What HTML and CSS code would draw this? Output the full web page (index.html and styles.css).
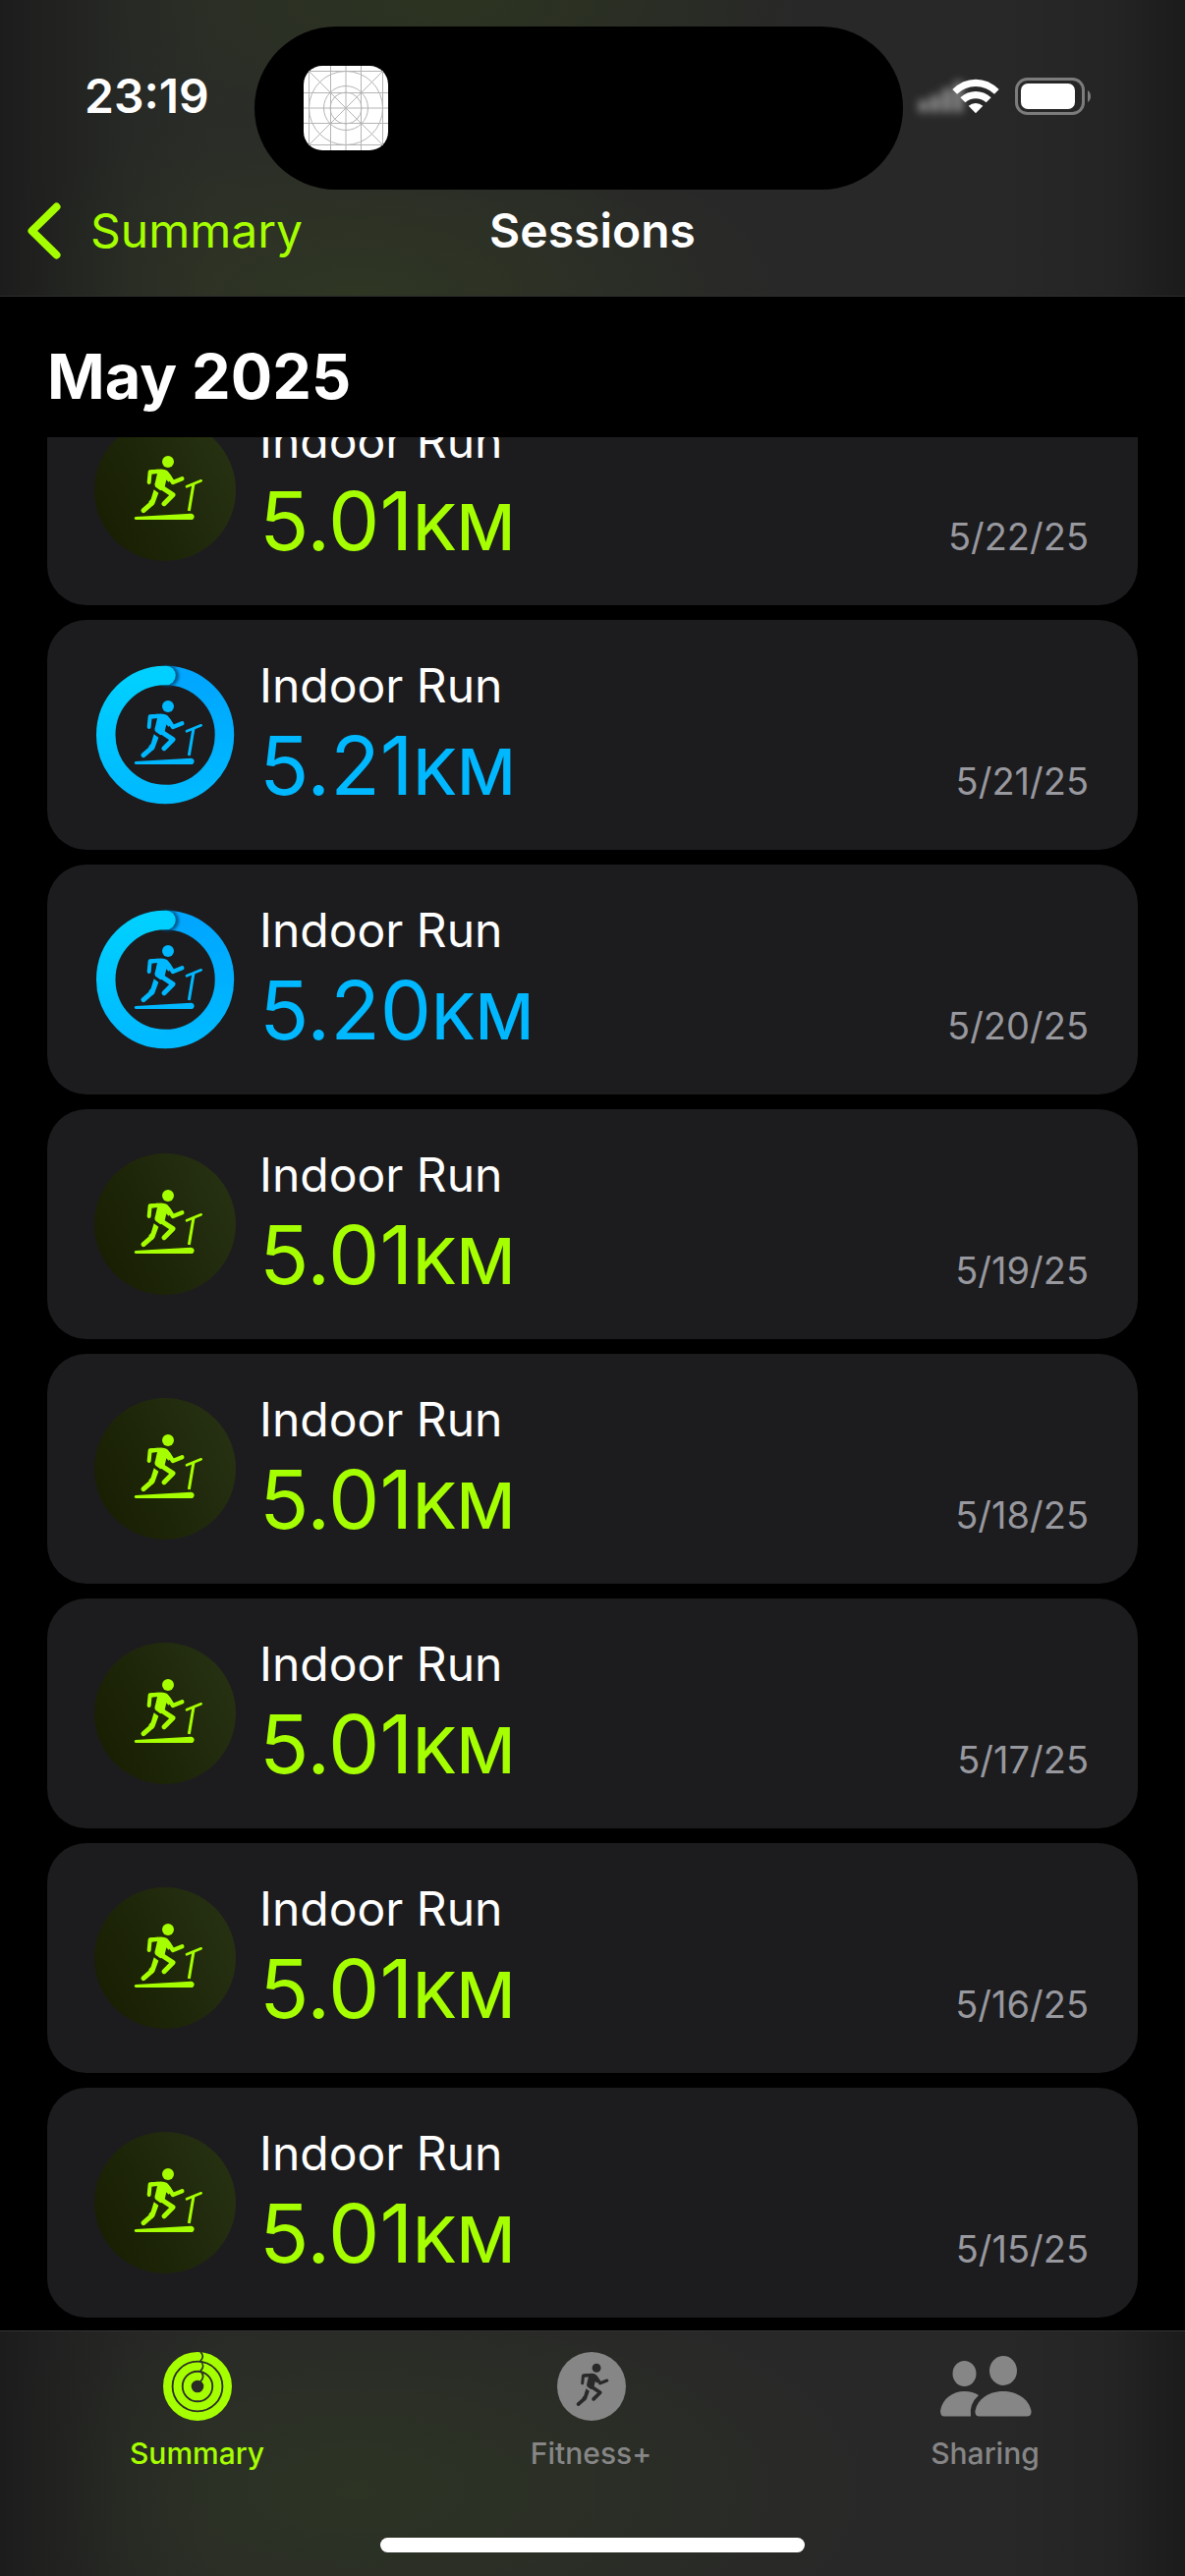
FILE: index.html
```html
<!DOCTYPE html>
<html lang="en">
<head>
<meta charset="utf-8">
<meta name="viewport" content="width=device-width, initial-scale=1">
<title>Sessions</title>
<link rel="stylesheet" href="styles.css">
</head>
<body>
<svg class="defs" aria-hidden="true">
  <defs>
    <linearGradient id="ring-start" x1="0" y1="0" x2="0" y2="1">
      <stop offset="0" stop-color="#00a6ff"/><stop offset="1" stop-color="#00baff"/>
    </linearGradient>
    <linearGradient id="ring-end" x1="0" y1="1" x2="0" y2="0">
      <stop offset="0" stop-color="#00baff"/><stop offset="1" stop-color="#00d0ff"/>
    </linearGradient>
    <filter id="cap-shadow" x="-50%" y="-50%" width="200%" height="200%">
      <feGaussianBlur stdDeviation="1.5"/>
    </filter>
  </defs>
  <symbol id="runner" viewBox="0 0 240 240">
    <circle cx="123" cy="36" r="18" fill="currentColor"/>
    <path d="M66 64Q70 59 92 59Q112 57 120 63Q127 68 137 88L124 98L118 91L112 116L100 124L86 114Q80 108 84 98L90 72L72 74Z" fill="currentColor"/>
    <g fill="none" stroke="currentColor" stroke-linecap="round" stroke-linejoin="round">
      <path d="M65 99L68 67L92 65" stroke-width="12"/>
      <path d="M124 78L138 99L166 88" stroke-width="13"/>
      <path d="M94 108L138 137L111 164" stroke-width="15"/>
      <path d="M73 163L48 185" stroke-width="15"/>
    </g>
    <path d="M80 121L94 131L82 164Q78 170 70 172L64 158L71 150Z" fill="currentColor"/>
  </symbol>
  <symbol id="treadmill" viewBox="0 0 240 240">
    <use href="#runner" width="240" height="240"/>
    <path d="M24 204L193 194Q202 195 203 203Q202 213 193 213L24 213Q20 212 20 208Q21 205 24 204Z" fill="currentColor"/>
    <path d="M180 112L224 94" fill="none" stroke="currentColor" stroke-width="8" stroke-linecap="round"/>
    <path d="M201 103L187 186" fill="none" stroke="currentColor" stroke-width="9"/>
  </symbol>
  <symbol id="goal" viewBox="0 0 144 144">
    <path d="M72 11.500A60.500 60.500 0 0 1 72 132.500" fill="none" stroke="url(#ring-start)" stroke-width="19.500"/>
    <circle cx="75" cy="12" r="11" fill="#00406a" opacity=".75" filter="url(#cap-shadow)"/>
    <path d="M72.500 132.500A60.500 60.500 0 0 1 72 11.500" fill="none" stroke="url(#ring-end)" stroke-width="19.500"/>
    <circle cx="73" cy="11.500" r="9.750" fill="#00d0ff"/>
    <use href="#treadmill" x="34" y="31" width="80" height="80"/>
  </symbol>
  <symbol id="plain" viewBox="0 0 144 144">
    <use href="#treadmill" x="34" y="31" width="80" height="80"/>
  </symbol>
</svg>

<div class="screen">
  <header class="header">
    <div class="status">
      <span class="time">23:19</span>
      <div class="status-icons">
        <svg class="signal" viewBox="0 0 50 36" aria-hidden="true"><path d="M2 22h9v12H2zM14 17h9v17h-9zM26 10h9v24h-9zM38 3h9v31h-9z" fill="#888"/></svg>
        <svg class="wifi" viewBox="0 0 144 108" aria-hidden="true" fill="#fff">
          <path d="M1 33Q32 2 72 2Q112 2 143 33L129 47Q104 24 72 24Q40 24 15 47Z"/>
          <path d="M25 58Q46 39 72 39Q98 39 119 58L104 73Q90 61 72 61Q54 61 40 73Z"/>
          <path d="M50 83Q60 75 72 75Q84 75 94 83L72 106Z"/>
        </svg>
        <svg class="battery" viewBox="0 0 78 38" aria-hidden="true">
          <rect x="1.500" y="1.500" width="68" height="35" rx="11" fill="none" stroke="#7c7c7c" stroke-width="3"/>
          <rect x="6" y="6" width="55" height="26" rx="7" fill="#fff"/>
          <path d="M74 13Q77 15 77 19T74 25Z" fill="#7c7c7c"/>
        </svg>
      </div>
      <div class="island">
        <svg class="app-icon" viewBox="0 0 86 86" role="img" aria-label="App">
          <rect width="86" height="86" rx="19" fill="#fff"/>
          <g fill="none" stroke="#b4b4b4">
            <path d="M5.500 5v76M27.500 0v86M43 0v86M58.500 0v86M80.500 5v76M5 5.500h76M0 27.500h86M0 43h86M0 58.500h86M5 80.500h76M5 5l76 76M81 5L5 81"/>
            <circle cx="43" cy="43" r="37.500"/><circle cx="43" cy="43" r="22.500"/><circle cx="43" cy="43" r="16"/>
          </g>
        </svg>
      </div>
    </div>
    <nav class="nav">
      <a class="back" href="#summary">
        <svg class="chevron" viewBox="0 0 34 58" aria-hidden="true"><path d="M29.500 4.500L4.500 29L29.500 53.500" fill="none" stroke="currentColor" stroke-width="8" stroke-linecap="round" stroke-linejoin="round"/></svg>
        Summary
      </a>
      <h1 class="title">Sessions</h1>
    </nav>
  </header>

  <main class="content">
    <h2 class="month">May 2025</h2>
    <ul class="sessions">
      <li class="session"><svg class="badge" aria-hidden="true"><use href="#plain"/></svg><div class="details"><h3 class="name">Indoor Run</h3><div class="row"><span class="distance">5.01<span class="unit">KM</span></span><time class="date">5/22/25</time></div></div></li>
      <li class="session met"><svg class="badge" aria-hidden="true"><use href="#goal"/></svg><div class="details"><h3 class="name">Indoor Run</h3><div class="row"><span class="distance">5.21<span class="unit">KM</span></span><time class="date">5/21/25</time></div></div></li>
      <li class="session met"><svg class="badge" aria-hidden="true"><use href="#goal"/></svg><div class="details"><h3 class="name">Indoor Run</h3><div class="row"><span class="distance">5.20<span class="unit">KM</span></span><time class="date">5/20/25</time></div></div></li>
      <li class="session"><svg class="badge" aria-hidden="true"><use href="#plain"/></svg><div class="details"><h3 class="name">Indoor Run</h3><div class="row"><span class="distance">5.01<span class="unit">KM</span></span><time class="date">5/19/25</time></div></div></li>
      <li class="session"><svg class="badge" aria-hidden="true"><use href="#plain"/></svg><div class="details"><h3 class="name">Indoor Run</h3><div class="row"><span class="distance">5.01<span class="unit">KM</span></span><time class="date">5/18/25</time></div></div></li>
      <li class="session"><svg class="badge" aria-hidden="true"><use href="#plain"/></svg><div class="details"><h3 class="name">Indoor Run</h3><div class="row"><span class="distance">5.01<span class="unit">KM</span></span><time class="date">5/17/25</time></div></div></li>
      <li class="session"><svg class="badge" aria-hidden="true"><use href="#plain"/></svg><div class="details"><h3 class="name">Indoor Run</h3><div class="row"><span class="distance">5.01<span class="unit">KM</span></span><time class="date">5/16/25</time></div></div></li>
      <li class="session"><svg class="badge" aria-hidden="true"><use href="#plain"/></svg><div class="details"><h3 class="name">Indoor Run</h3><div class="row"><span class="distance">5.01<span class="unit">KM</span></span><time class="date">5/15/25</time></div></div></li>
    </ul>
  </main>

  <footer class="footer">
    <nav class="tabs">
      <a class="tab active" href="#summary">
        <svg class="tab-icon" viewBox="0 0 210 210" aria-hidden="true" fill="none">
          <g stroke="currentColor"><circle cx="105" cy="105" r="92" stroke-width="26"/><circle cx="105" cy="105" r="61" stroke-width="25"/><circle cx="105" cy="105" r="31" stroke-width="24"/></g>
          <path d="M114 0Q128 13 114 27Q130 43 114 58Q130 74 114 90" stroke="#2b2f26" stroke-width="5"/>
        </svg>
        Summary
      </a>
      <a class="tab" href="#fitness">
        <svg class="tab-icon" viewBox="0 0 210 210" aria-hidden="true"><circle cx="105" cy="105" r="105" fill="currentColor"/><use class="cutout" href="#runner" x="29" y="22" width="178" height="178"/></svg>
        Fitness+
      </a>
      <a class="tab" href="#sharing">
        <svg class="tab-icon people" viewBox="0 0 94 70" aria-hidden="true" fill="currentColor">
          <ellipse cx="25.500" cy="22" rx="12" ry="13"/><ellipse cx="65" cy="19" rx="14" ry="15"/>
          <path d="M5 65.500Q1 65.500 1 60C3 47 14 40 25.500 40Q34 40 40 44Q30 53 32 65.500Z"/>
          <path d="M41 65.500Q36 65.500 36.500 60C39 47 52 40 65 40S91 47 93.500 60Q94 65.500 89 65.500Z"/>
        </svg>
        Sharing
      </a>
    </nav>
    <div class="home-indicator"></div>
  </footer>
</div>
</body>
</html>
```
FILE: styles.css
```css
* {
  box-sizing: border-box;
  margin: 0;
  padding: 0;
}

:root {
  --lime: #a6ff00;
  --blue: #00b8ff;
  --card: #1c1c1e;
}

body {
  background: #000;
  color: #fff;
  font-family: Inter, "Liberation Sans", sans-serif;
}

a {
  color: inherit;
  text-decoration: none;
}

.defs {
  position: absolute;
  width: 0;
  height: 0;
}

.screen {
  display: flex;
  flex-direction: column;
  height: 100vh;
}

.header,
.footer {
  flex: none;
  background:
    linear-gradient(90deg, #1c1c1c, #1c1c1c99 5%, #1c1c1c33 11%, #1c1c1c00 18%, #1c1c1c00 84%, #1c1c1c55 94%, #1b1b1b),
    radial-gradient(ellipse 44% 90% at 30% 65%, #2d3424, #2d342400),
    #282828;
}

.header {
  background:
    linear-gradient(90deg, #1c1c1c, #1c1c1c99 5%, #1c1c1c33 11%, #1c1c1c00 18%, #1c1c1c00 84%, #1c1c1c55 94%, #1b1b1b),
    radial-gradient(ellipse 30% 50% at 38% 0%, #2c3420, #2c342000),
    radial-gradient(ellipse 36% 60% at 30% 100%, #2f3623, #2f362300),
    linear-gradient(90deg, #2a2d28, #2a2c28 30%, #282828 55%);
  border-bottom: 1px solid #2c2c2c;
}

.status {
  position: relative;
  display: flex;
  justify-content: space-between;
  align-items: center;
  height: 196px;
  padding: 0 95px 0 86px;
}

.time {
  font-size: 48px;
  font-weight: 600;
  line-height: 60px;
}

.status-icons {
  display: flex;
  align-items: center;
}

.signal {
  width: 50px;
  height: 36px;
  margin-right: -14px;
  filter: blur(4px);
}

.wifi {
  position: relative;
  width: 48px;
  height: 36px;
  margin-right: 16px;
}

.battery {
  width: 78px;
  height: 38px;
}

.island {
  position: absolute;
  top: 27px;
  left: 50%;
  display: flex;
  align-items: center;
  width: 660px;
  height: 166px;
  margin-left: -344px;
  padding-left: 50px;
  border-radius: 83px;
  background: #000;
}

.app-icon {
  width: 86px;
  height: 86px;
}

.nav {
  display: grid;
  grid-template-columns: 1fr auto 1fr;
  align-items: center;
  height: 105px;
  padding: 0 28px 28px;
}

.back {
  display: flex;
  align-items: center;
  gap: 30px;
  color: var(--lime);
  font-size: 48px;
  line-height: 60px;
}

.chevron {
  width: 34px;
  height: 58px;
}

.title {
  font-size: 48px;
  font-weight: 600;
  line-height: 60px;
}

.content {
  display: flex;
  flex: 1;
  flex-direction: column;
  min-height: 0;
  padding: 0 48px;
}

.month {
  flex: none;
  padding: 41px 0 22px;
  font-size: 63px;
  font-weight: 700;
  line-height: 80px;
}

.sessions {
  flex: 1;
  min-height: 0;
  overflow: hidden;
  list-style: none;
}

.session {
  display: flex;
  align-items: center;
  gap: 24px;
  margin-bottom: 15px;
  padding: 37px 50px 37px 48px;
  border-radius: 40px;
  background: var(--card);
  color: var(--lime);
}

/* the list opens scrolled a little past its first card's top */
.session:first-child {
  margin-top: -63px;
}

.session.met {
  color: var(--blue);
}

.badge {
  flex: none;
  width: 144px;
  height: 144px;
  border-radius: 50%;
  background: linear-gradient(65deg, #161c00, #283314);
}

.met .badge {
  overflow: visible;
  background: none;
}

.details {
  display: flex;
  flex: 1;
  flex-direction: column;
  gap: 2px;
}

.name {
  color: #fff;
  font-size: 48px;
  font-weight: 400;
  line-height: 60px;
}

.row {
  display: flex;
  justify-content: space-between;
  align-items: baseline;
  height: 98px;
}

.distance {
  font-size: 83px;
  line-height: 98px;
}

.unit {
  font-size: 65px;
  font-weight: 500;
}

.date {
  color: #98989f;
  font-size: 38px;
}

.footer {
  border-top: 1px solid #333;
}

.tabs {
  display: grid;
  grid-template-columns: repeat(3, 1fr);
  padding: 21px 3px 0 0;
}

.tab {
  display: flex;
  flex-direction: column;
  align-items: center;
  gap: 15px;
  color: #868686;
  font-size: 30px;
  font-weight: 500;
  line-height: 36px;
}

.tab.active {
  color: var(--lime);
}

.tab-icon {
  width: 70px;
  height: 70px;
}

.tab-icon.people {
  width: 94px;
}

.cutout {
  color: #292929;
}

.home-indicator {
  width: 432px;
  height: 15px;
  margin: 68px auto 24px;
  border-radius: 8px;
  background: #fff;
}
```
